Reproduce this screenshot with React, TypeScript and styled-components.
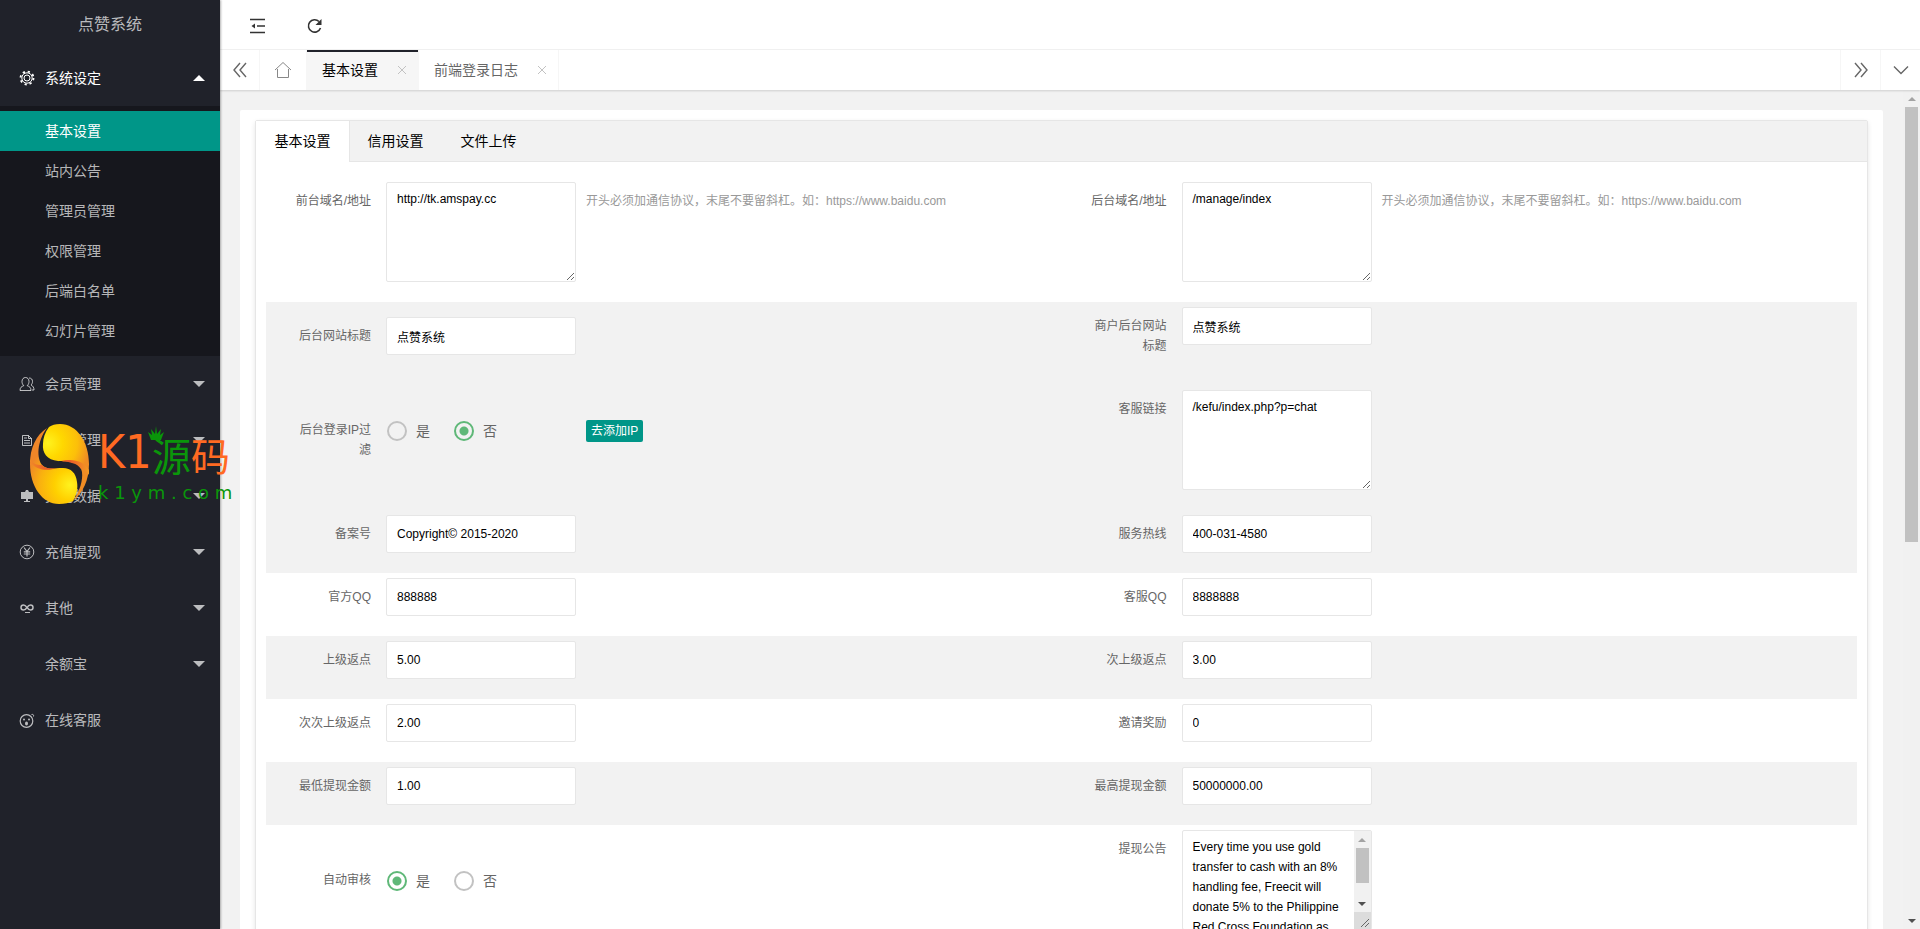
import React from "react";
import styled, { createGlobalStyle, css } from "styled-components";

const sans = `"Liberation Sans", "Noto Sans CJK SC", sans-serif`;

const GlobalStyle = createGlobalStyle`
  * { box-sizing: border-box; }
  body { margin: 0; background: #f2f2f2; color: #666; font: 14px/24px ${sans}; }
  button, input, textarea { font-family: inherit; }
  a { color: inherit; text-decoration: none; }
`;

const Shell = styled.div`
  display: flex;
  height: 100vh;
  overflow: hidden;
`;

/* ---------- sidebar ---------- */

const Sidebar = styled.aside`
  position: relative;
  z-index: 2;
  flex: 0 0 220px;
  background: #20222a;
  color: rgba(255, 255, 255, 0.7);
  box-shadow: 1px 0 2px rgba(0, 0, 0, 0.3);
`;

const Brand = styled.div`
  height: 50px;
  font-size: 16px;
  line-height: 50px;
  text-align: center;
`;

const NavItem = styled.a<{ $open?: boolean }>`
  display: flex;
  align-items: center;
  height: 56px;
  padding: 0 15px 0 19px;
  color: ${(p) => (p.$open ? "#fff" : "inherit")};
  svg { flex: none; }
`;

const NavIcon = styled.span`
  display: flex;
  width: 26px;
`;

const NavText = styled.span`
  flex: 1;
`;

const Caret = styled.span<{ $open?: boolean }>`
  border: 6px solid transparent;
  ${(p) =>
    p.$open
      ? css`border-bottom-color: #fff; border-top-width: 0;`
      : css`border-top-color: currentColor; border-bottom-width: 0;`}
`;

const SubMenu = styled.nav`
  padding: 5px 0;
  background: rgba(0, 0, 0, 0.3);
`;

const SubItem = styled.a<{ $active?: boolean }>`
  display: block;
  padding-left: 45px;
  line-height: 40px;
  ${(p) => p.$active && css`background: #009688; color: #fff;`}
`;

const Watermark = styled.div`
  position: absolute;
  left: 29px;
  top: 423px;
  display: flex;
  pointer-events: none;
`;

const MarkWords = styled.div`
  padding-left: 8px;
  white-space: nowrap;
`;

const MarkTitle = styled.div`
  position: relative;
  display: flex;
  height: 60px;
  color: #ff6a22;
  font: 39px/62px "Noto Sans CJK SC", sans-serif;
`;

const MarkLatin = styled.span`
  width: 54px;
  font-family: "DejaVu Sans Condensed", "DejaVu Sans", sans-serif;
  font-size: 46px;
  line-height: 58px;
`;

const Green = styled.span`
  color: #0a960a;
`;

const Crown = styled.svg`
  position: absolute;
  left: 50px;
  top: 3px;
`;

const MarkSite = styled.div`
  color: #0a960a;
  font: 18px/20px "DejaVu Sans", sans-serif;
`;

/* ---------- top bars ---------- */

const Main = styled.div`
  flex: 1;
  min-width: 0;
  display: flex;
  flex-direction: column;
`;

const Header = styled.header`
  display: flex;
  flex: 0 0 50px;
  align-items: center;
  gap: 40px;
  padding: 2px 29px 0;
  background: #fff;
  border-bottom: 1px solid #f2f2f2;
`;

const IconButton = styled.button`
  display: flex;
  padding: 0;
  border: 0;
  background: none;
  color: #333;
`;

const TabBar = styled.div`
  position: relative;
  z-index: 1;
  display: flex;
  flex: 0 0 40px;
  background: #fff;
  box-shadow: 0 1px 2px rgba(0, 0, 0, 0.15);
`;

const TabControl = styled.button<{ $side: "left" | "right"; $width?: number }>`
  display: flex;
  align-items: center;
  justify-content: center;
  width: ${(p) => p.$width ?? 40}px;
  padding: 0;
  border: 0;
  border-${(p) => p.$side}: 1px solid #f6f6f6;
  background: none;
  color: #666;
`;

const PageTab = styled.a<{ $active?: boolean }>`
  display: flex;
  align-items: center;
  gap: 19px;
  padding: 0 11px 0 15px;
  border-right: 1px solid #f6f6f6;
  line-height: 40px;
  ${(p) =>
    p.$active &&
    css`
      background: #f6f6f6;
      color: #000;
      box-shadow: inset 0 2px #20222a;
    `}
`;

const Spacer = styled.div`
  flex: 1;
`;

/* ---------- page body ---------- */

const Body = styled.div`
  display: flex;
  flex: 1;
  min-height: 0;
`;

const Scroller = styled.main`
  flex: 1;
  min-width: 0;
  overflow-x: hidden;
  overflow-y: auto;
  scrollbar-width: none;
  padding: 20px;
`;

const Card = styled.section`
  padding: 10px 15px;
  background: #fff;
  border-radius: 2px;
`;

const TabCard = styled.div`
  border: 1px solid #e6e6e6;
  border-radius: 2px;
  box-shadow: 0 2px 5px rgba(0, 0, 0, 0.1);
`;

const TabTitles = styled.div`
  display: flex;
  height: 41px;
  background: #f2f2f2;
  border-bottom: 1px solid #e6e6e6;
`;

const TabTitle = styled.button<{ $active?: boolean }>`
  width: 93px;
  height: 41px;
  padding: 0 0 1px;
  border: 0;
  background: none;
  color: #000;
  font-size: 14px;
  line-height: 40px;
  ${(p) => p.$active && css`background: #fff; box-shadow: 1px 0 #e6e6e6;`}
`;

const Form = styled.form`
  padding: 15px 10px;
`;

const Row = styled.div<{ $shaded?: boolean }>`
  display: grid;
  grid-template-columns: 1fr 1fr;
  align-items: center;
  padding: 5px 0;
  background: ${(p) => (p.$shaded ? "#f2f2f2" : "#fff")};
`;

const Item = styled.div`
  display: flex;
  align-items: flex-start;
  padding: 0 0 15px 10px;
`;

const Label = styled.label`
  width: 110px;
  padding: 9px 15px;
  font-size: 12px;
  line-height: 20px;
  text-align: right;
`;

const Control = styled.div`
  width: 190px;
`;

const field = css`
  display: block;
  width: 100%;
  border: 1px solid #e6e6e6;
  border-radius: 2px;
  background: #fff;
  color: #000;
  font-size: 12px;
`;

const TextInput = styled.input`
  ${field}
  height: 38px;
  padding: 0 10px;
`;

const TextArea = styled.textarea`
  ${field}
  height: 100px;
  padding: 6px 10px;
  line-height: 20px;
  resize: vertical;
`;

const ScrollField = styled.div`
  ${field}
  display: flex;
  height: 100px;
`;

const ScrollArea = styled.textarea`
  flex: 1;
  min-width: 0;
  padding: 6px 10px;
  border: 0;
  background: none;
  color: #000;
  font-size: 12px;
  line-height: 20px;
  resize: none;
  scrollbar-width: none;
`;

const ScrollTrack = styled.div`
  display: flex;
  flex: 0 0 17px;
  flex-direction: column;
  background: #f1f1f1;
`;

const ScrollArrow = styled.span<{ $down?: boolean }>`
  display: flex;
  flex: 0 0 17px;
  align-items: center;
  justify-content: center;
  &::before {
    content: "";
    border: 4px solid transparent;
    ${(p) =>
      p.$down
        ? css`border-top-color: #505050; border-bottom-width: 0;`
        : css`border-bottom-color: #a3a3a3; border-top-width: 0;`}
  }
`;

const ScrollLane = styled.div`
  flex: 1;
  padding: 0 2px;
`;

const ScrollThumb = styled.div<{ $size: number }>`
  height: ${(p) => p.$size}%;
  background: #c1c1c1;
`;

const Grip = styled.span`
  display: flex;
  flex: 0 0 17px;
  align-items: flex-end;
  justify-content: flex-end;
  background: #dcdcdc;
`;

const Hint = styled.div`
  padding: 9px 10px;
  color: #999;
  font-size: 12px;
  line-height: 20px;
`;

const SmallButton = styled.button`
  height: 22px;
  margin: 9px 10px;
  padding: 0 5px;
  border: 0;
  border-radius: 2px;
  background: #009688;
  color: #fff;
  font-size: 12px;
  line-height: 22px;
`;

const RadioGroup = styled.div`
  display: flex;
  gap: 24px;
  height: 38px;
  padding: 2px 0 0 1px;
  align-items: center;
`;

const RadioLabel = styled.label`
  display: flex;
  align-items: center;
  gap: 9px;
`;

const Radio = styled.input`
  appearance: none;
  width: 20px;
  height: 20px;
  margin: 0;
  border: 2px solid #c2c2c2;
  border-radius: 50%;
  &:checked {
    border-color: #5fb878;
    background: radial-gradient(circle, #5fb878 4px, transparent 5px);
  }
`;

/* ---------- icons ---------- */

const line = { fill: "none", stroke: "currentColor" } as const;

const GearIcon = () => (
  <svg width="16" height="16" viewBox="0 0 16 16" {...line}>
    <circle cx="8" cy="8" r="5.2" />
    <circle cx="8" cy="8" r="3" />
    <circle cx="8" cy="8" r="6.5" strokeWidth="1.800" strokeDasharray="2.2 2.9" />
  </svg>
);
const UserIcon = () => (
  <svg width="16" height="16" viewBox="0 0 16 16" {...line}>
    <path d="M1 14.5c0-3 1.500-4 3.800-4.800C3.500 8.500 3 7 3 5.500 3 3 4.500 1.500 6.500 1.500S10 3 10 5.500c0 1.500-.5 3-1.800 4.200 2.300.8 3.800 1.800 3.800 4.800z" />
    <path d="M10 2c2.500 0 3.500 1.500 3.500 3.500 0 1.500-.5 2.500-1.500 3.500 2 1 3 2.500 3 5h-2" />
  </svg>
);
const FileIcon = () => (
  <svg width="16" height="16" viewBox="0 0 16 16" {...line}>
    <path d="M3.500 3.500h6l3 3v7h-9zM9.500 3.500v3h3M5 6h3M5 8.500h6M5 11h6" />
  </svg>
);
const BoardIcon = () => (
  <svg width="16" height="16" viewBox="0 0 16 16" fill="currentColor">
    <path d="M2 4h4l1-2h2l1 2h4v7H9v2h2v1H5v-1h2v-2H2z" />
  </svg>
);
const YenIcon = () => (
  <svg width="16" height="16" viewBox="0 0 16 16" {...line}>
    <circle cx="8" cy="8" r="6.800" />
    <path d="M5 3.500 8 7.500l3-4M8 7.500v5M4.800 7.800h6.400M4.800 10h6.400" strokeWidth="1.200" />
  </svg>
);
const LinkIcon = () => (
  <svg width="16" height="16" viewBox="0 0 16 16" {...line}>
    <path d="M8 7.500C6.500 5.500 5.500 5 4.500 5a2.500 2.500 0 0 0 0 5C6 10 7 9 8 7.500S10 5 11.500 5a2.500 2.500 0 0 1 0 5C10.500 10 9.500 9.500 8 7.500z" strokeWidth="1.500" />
    <path d="M6 12.500h5" />
  </svg>
);
const FaceIcon = () => (
  <svg width="16" height="16" viewBox="0 0 16 16" {...line}>
    <circle cx="7.500" cy="9" r="6.300" strokeWidth="1.200" />
    <path d="M12.500 2.500c1.500-.5 2.500.5 2 2" />
    <g fill="currentColor" stroke="none">
      <circle cx="5" cy="7.500" r="1" /><circle cx="10" cy="7.500" r="1" />
      <ellipse cx="7.500" cy="11.500" rx="1.500" ry="2" />
    </g>
  </svg>
);
const CloseIcon = () => (
  <svg width="10" height="10" viewBox="0 0 10 10" fill="none" stroke="#c2c2c2">
    <path d="M1 1l8 8M9 1L1 9" />
  </svg>
);

const EggLogo = () => (
  <svg width="61" height="82" viewBox="0 0 61 82">
    <defs>
      <radialGradient id="eggTop" gradientUnits="userSpaceOnUse" cx="19" cy="20" r="42">
        <stop offset="0" stopColor="#fff21e" /><stop offset="0.35" stopColor="#ffd800" /><stop offset="0.700" stopColor="#fcbf0a" /><stop offset="1" stopColor="#f08c24" />
      </radialGradient>
      <radialGradient id="eggLow" gradientUnits="userSpaceOnUse" cx="41" cy="62" r="44">
        <stop offset="0" stopColor="#fff21e" /><stop offset="0.35" stopColor="#ffd000" /><stop offset="0.700" stopColor="#f9b010" /><stop offset="1" stopColor="#ee8628" />
      </radialGradient>
      <linearGradient id="emberLeft"><stop offset="0" stopColor="#f08a28" /><stop offset="1" stopColor="#e8402a" /></linearGradient>
      <linearGradient id="emberRight"><stop offset="0" stopColor="#e8402a" /><stop offset="1" stopColor="#f39a24" /></linearGradient>
    </defs>
    <path d="M20 4C23 2 26 1 31 1c17 0 29 18 29 40 0 16-6 29-16 37 7-10 10-21 9-29C51 37 38 39 29 38 18 37 13 30 14 21c0-6 2-12 6-17z" fill="url(#eggTop)" />
    <path d="M18 5C7 12 1 25 1 41c0 22 12 40 29 40 6 0 10-1 14-3 4-7 5-13 4-19C47 50 42 45 34 45c-10 0-14 2-20-2C7 36 8 18 18 5z" fill="url(#eggLow)" />
    <path d="M1 36c3 5 7 6 12 6 4 4 9 4 15 3-9 3-20 3-27-6z" fill="url(#emberLeft)" />
    <path d="M32 38c12-3 23 0 28 9v5c-2-4-5-6-8-6-4-6-11-7-20-8z" fill="url(#emberRight)" />
  </svg>
);

/* ---------- data ---------- */

const subItems = ["基本设置", "站内公告", "管理员管理", "权限管理", "后端白名单", "幻灯片管理"];

const navItems: { text: string; icon?: React.ReactNode; leaf?: boolean }[] = [
  { text: "会员管理", icon: <UserIcon /> },
  { text: "任务管理", icon: <FileIcon /> },
  { text: "其他数据", icon: <BoardIcon /> },
  { text: "充值提现", icon: <YenIcon /> },
  { text: "其他", icon: <LinkIcon /> },
  { text: "余额宝" },
  { text: "在线客服", icon: <FaceIcon />, leaf: true },
];

type Field = {
  label: string;
  value: string;
  kind?: "area" | "scroll" | "radio";
  hint?: string;
  action?: string;
};

const urlHint = "开头必须加通信协议，末尾不要留斜杠。如：https://www.baidu.com";
const notice =
  "Every time you use gold transfer to cash with an 8% handling fee, Freecit will donate 5% to the Philippine Red Cross Foundation as charity funding to help more people in need.";

const rows: { shaded?: boolean; fields: [Field, Field] }[] = [
  { fields: [
    { label: "前台域名/地址", value: "http://tk.amspay.cc", kind: "area", hint: urlHint },
    { label: "后台域名/地址", value: "/manage/index", kind: "area", hint: urlHint },
  ] },
  { shaded: true, fields: [
    { label: "后台网站标题", value: "点赞系统" },
    { label: "商户后台网站标题", value: "点赞系统" },
  ] },
  { shaded: true, fields: [
    { label: "后台登录IP过滤", value: "否", kind: "radio", action: "去添加IP" },
    { label: "客服链接", value: "/kefu/index.php?p=chat", kind: "area" },
  ] },
  { shaded: true, fields: [
    { label: "备案号", value: "Copyright© 2015-2020" },
    { label: "服务热线", value: "400-031-4580" },
  ] },
  { fields: [
    { label: "官方QQ", value: "888888" },
    { label: "客服QQ", value: "8888888" },
  ] },
  { shaded: true, fields: [
    { label: "上级返点", value: "5.00" },
    { label: "次上级返点", value: "3.00" },
  ] },
  { fields: [
    { label: "次次上级返点", value: "2.00" },
    { label: "邀请奖励", value: "0" },
  ] },
  { shaded: true, fields: [
    { label: "最低提现金额", value: "1.00" },
    { label: "最高提现金额", value: "50000000.00" },
  ] },
  { fields: [
    { label: "自动审核", value: "是", kind: "radio" },
    { label: "提现公告", value: notice, kind: "scroll" },
  ] },
];

function Scrollbar({ size, grip }: { size: number; grip?: boolean }) {
  return (
    <ScrollTrack aria-hidden="true">
      <ScrollArrow />
      <ScrollLane><ScrollThumb $size={size} /></ScrollLane>
      <ScrollArrow $down />
      {grip && (
        <Grip>
          <svg width="12" height="12" viewBox="0 0 12 12" fill="none" stroke="#666">
            <path d="M2 10l8-8M6 10l4-4" />
          </svg>
        </Grip>
      )}
    </ScrollTrack>
  );
}

function FormItem({ field: f, id }: { field: Field; id: string }) {
  return (
    <Item>
      <Label htmlFor={f.kind === "radio" ? undefined : id} id={`${id}-label`}>{f.label}</Label>
      <Control>
        {f.kind === "area" && <TextArea id={id} defaultValue={f.value} />}
        {f.kind === "scroll" && (
          <ScrollField>
            <ScrollArea id={id} defaultValue={f.value} />
            <Scrollbar size={75} grip />
          </ScrollField>
        )}
        {f.kind === "radio" && (
          <RadioGroup role="radiogroup" aria-labelledby={`${id}-label`}>
            {["是", "否"].map((o) => (
              <RadioLabel key={o}>
                <Radio type="radio" name={id} defaultChecked={o === f.value} />
                {o}
              </RadioLabel>
            ))}
          </RadioGroup>
        )}
        {!f.kind && <TextInput id={id} defaultValue={f.value} />}
      </Control>
      {f.hint && <Hint>{f.hint}</Hint>}
      {f.action && <SmallButton type="button">{f.action}</SmallButton>}
    </Item>
  );
}

export default function App() {
  return (
    <Shell>
      <GlobalStyle />
      <Sidebar>
        <Brand>点赞系统</Brand>
        <NavItem href="#" $open>
          <NavIcon><GearIcon /></NavIcon>
          <NavText>系统设定</NavText>
          <Caret $open />
        </NavItem>
        <SubMenu>
          {subItems.map((t, i) => (
            <SubItem href="#" key={t} $active={i === 0}>{t}</SubItem>
          ))}
        </SubMenu>
        {navItems.map((n) => (
          <NavItem href="#" key={n.text}>
            <NavIcon>{n.icon}</NavIcon>
            <NavText>{n.text}</NavText>
            {!n.leaf && <Caret />}
          </NavItem>
        ))}
        <Watermark>
          <EggLogo />
          <MarkWords>
            <MarkTitle>
              <MarkLatin>K1</MarkLatin>
              <Crown width="16" height="15" viewBox="0 0 16 15" fill="#0a960a">
                <path d="M0 6l4 3-1-6 4 5 1-8 1 8 4-5-1 6 4-3-3 8H3z" />
              </Crown>
              <Green>源</Green>码
            </MarkTitle>
            <MarkSite>k 1 y m . c o m</MarkSite>
          </MarkWords>
        </Watermark>
      </Sidebar>

      <Main>
        <Header>
          <IconButton aria-label="收起菜单">
            <svg width="18" height="16" viewBox="0 0 18 16" fill="none" stroke="currentColor" strokeWidth="1.500">
              <path d="M1 1.500h15M8 8h8M1 14.500h15" /><path d="M6 5.500v5L2.500 8z" fill="currentColor" stroke="none" />
            </svg>
          </IconButton>
          <IconButton aria-label="刷新">
            <svg width="16" height="16" viewBox="0 0 16 16" fill="none" stroke="currentColor" strokeWidth="1.600">
              <path d="M13.500 10A6.200 6.200 0 1 1 12 3.500" /><path d="M14.500 1v6h-6z" fill="currentColor" stroke="none" />
            </svg>
          </IconButton>
        </Header>
        <TabBar>
          <TabControl $side="right" aria-label="向左">
            <svg width="16" height="16" viewBox="0 0 16 16" fill="none" stroke="currentColor" strokeWidth="1.400">
              <path d="M8 1L2 8l6 7M14 1L8 8l6 7" />
            </svg>
          </TabControl>
          <TabControl $side="right" $width={47} aria-label="主页">
            <svg width="18" height="18" viewBox="0 0 18 18" fill="none" stroke="#888">
              <path d="M1 9l8-7.500L17 9M3.500 8v8.500h11V8" />
            </svg>
          </TabControl>
          <PageTab href="#" $active>基本设置<CloseIcon /></PageTab>
          <PageTab href="#">前端登录日志<CloseIcon /></PageTab>
          <Spacer />
          <TabControl $side="left" aria-label="向右">
            <svg width="16" height="16" viewBox="0 0 16 16" fill="none" stroke="currentColor" strokeWidth="1.400">
              <path d="M2 1l6 7-6 7M8 1l6 7-6 7" />
            </svg>
          </TabControl>
          <TabControl $side="left" aria-label="更多">
            <svg width="16" height="16" viewBox="0 0 16 16" fill="none" stroke="currentColor" strokeWidth="1.400">
              <path d="M1 4.500l7 7 7-7" />
            </svg>
          </TabControl>
        </TabBar>
        <Body>
          <Scroller>
            <Card>
              <TabCard>
                <TabTitles>
                  <TabTitle $active>基本设置</TabTitle>
                  <TabTitle>信用设置</TabTitle>
                  <TabTitle>文件上传</TabTitle>
                </TabTitles>
                <Form>
                  {rows.map((r, i) => (
                    <Row key={i} $shaded={r.shaded}>
                      {r.fields.map((f, j) => (
                        <FormItem key={f.label} field={f} id={`field-${i}-${j}`} />
                      ))}
                    </Row>
                  ))}
                </Form>
              </TabCard>
            </Card>
          </Scroller>
          <Scrollbar size={54} />
        </Body>
      </Main>
    </Shell>
  );
}
